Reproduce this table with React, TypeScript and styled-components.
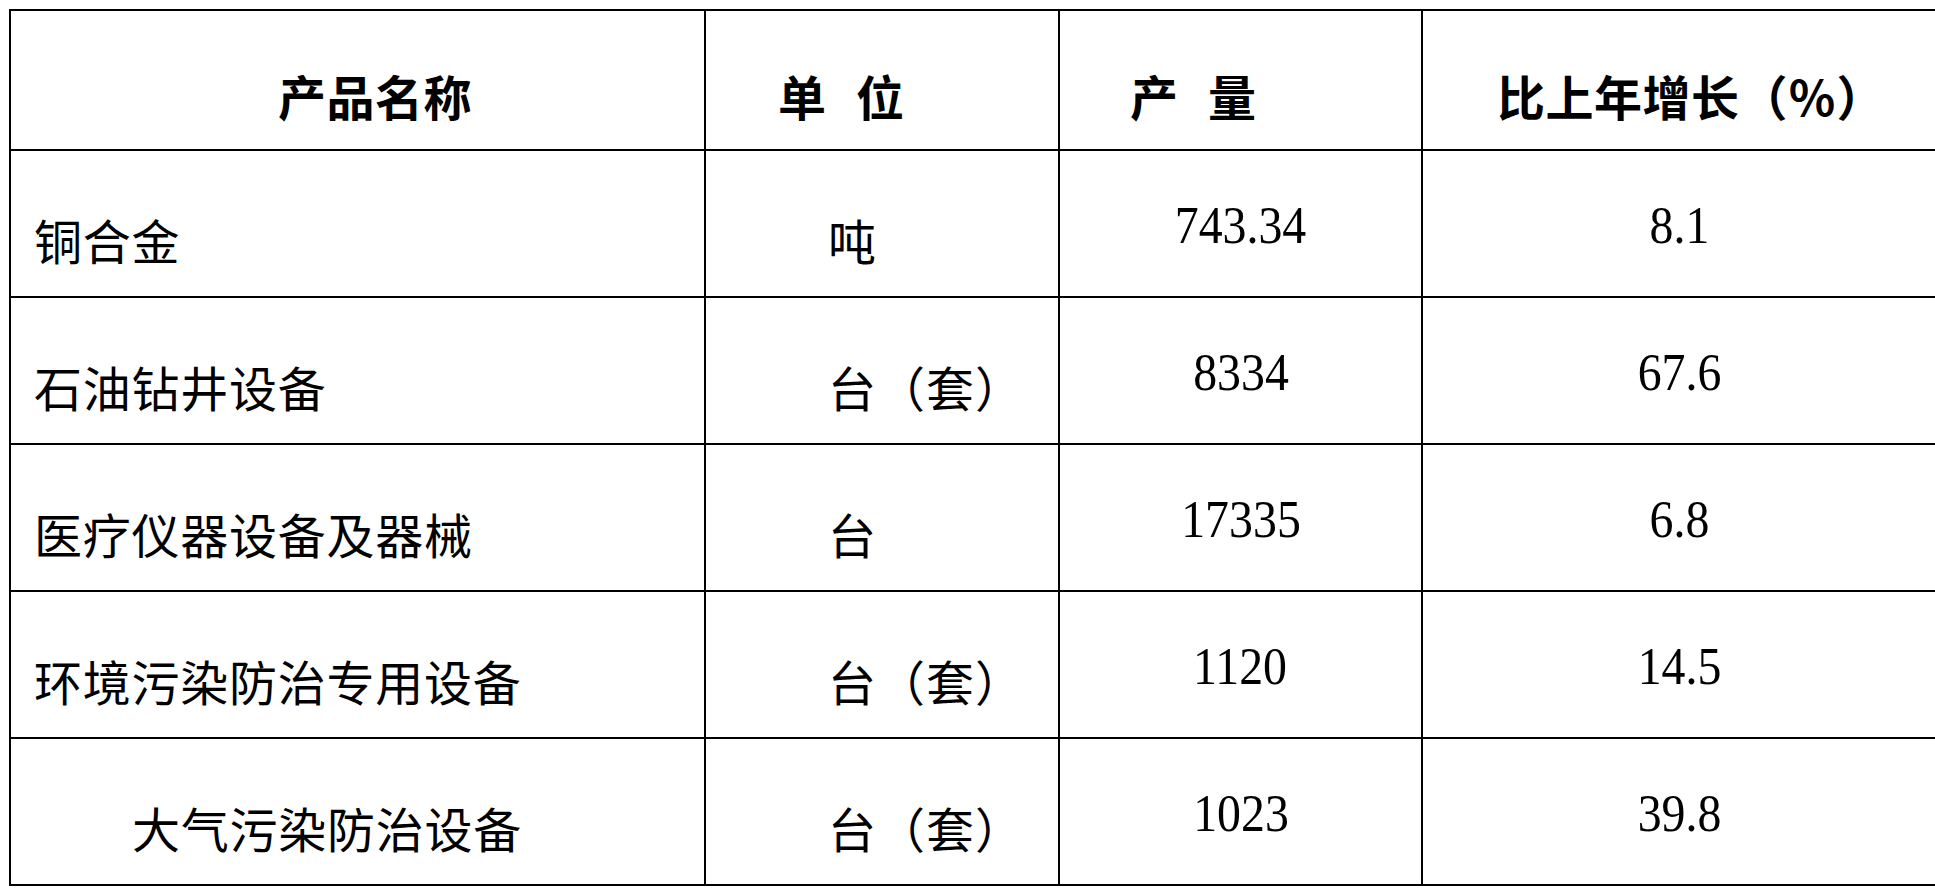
import React from "react";
import styled, { createGlobalStyle } from "styled-components";

const GlobalStyle = createGlobalStyle`
  html, body {
    margin: 0;
    padding: 0;
    background: #fff;
    overflow: hidden;
  }

  body {
    padding: 9px 0 0 9px;
    color: #000;
    font-family: "Noto Sans CJK SC", "Liberation Serif", serif;
  }
`;

const Sheet = styled.div`
  display: grid;
  grid-template-columns: 695px 354px 363px 1fr;
  grid-auto-rows: 147px;
  grid-template-rows: 140px;
  border-top: 2px solid #000;
  border-left: 2px solid #000;
`;

const Cell = styled.div<{ $last?: boolean }>`
  box-sizing: border-box;
  display: flex;
  align-items: flex-start;
  border-bottom: 2px solid #000;
  border-right: ${(p) => (p.$last ? "none" : "2px solid #000")};
  white-space: nowrap;
`;

const HeadCell = styled(Cell)<{ $pad: number }>`
  padding: 60px 0 0 ${(p) => p.$pad}px;
  font-family: "Noto Sans CJK SC", sans-serif;
  font-size: 48px;
  font-weight: 700;
  line-height: 48px;
  letter-spacing: 0.5px;
  word-spacing: 18px;
`;

const NameCell = styled(Cell)<{ $indent?: boolean }>`
  padding: 64px 0 0 ${(p) => (p.$indent ? 121 : 23)}px;
  font-family: "Noto Sans CJK SC", sans-serif;
  font-size: 48px;
  line-height: 48px;
  letter-spacing: 0.75px;
`;

const UnitCell = styled(Cell)`
  padding: 64px 0 0 122px;
  font-family: "Noto Sans CJK SC", sans-serif;
  font-size: 48px;
  line-height: 48px;
  letter-spacing: 1px;
`;

const NumCell = styled(Cell)`
  justify-content: center;
  padding-top: 49px;
  font-family: "Liberation Serif", "Times New Roman", serif;
  font-size: 52px;
  line-height: 52px;
`;

const Num = styled.span`
  display: inline-block;
  transform: scaleX(0.92);
`;

const headers = [
  { label: "产品名称", pad: 267 },
  { label: "单 位", pad: 72 },
  { label: "产 量", pad: 70 },
  { label: "比上年增长（％）", pad: 74 },
];

const rows = [
  { name: "铜合金", unit: "吨", output: "743.34", growth: "8.1" },
  { name: "石油钻井设备", unit: "台（套）", output: "8334", growth: "67.6" },
  { name: "医疗仪器设备及器械", unit: "台", output: "17335", growth: "6.8" },
  { name: "环境污染防治专用设备", unit: "台（套）", output: "1120", growth: "14.5" },
  { name: "大气污染防治设备", unit: "台（套）", output: "1023", growth: "39.8", sub: true },
];

export default function App() {
  return (
    <>
      <GlobalStyle />
      <Sheet>
        {headers.map((h, i) => (
          <HeadCell key={h.label} $pad={h.pad} $last={i === headers.length - 1}>
            {h.label}
          </HeadCell>
        ))}
        {rows.map((r) => (
          <React.Fragment key={r.name}>
            <NameCell $indent={r.sub}>{r.name}</NameCell>
            <UnitCell>{r.unit}</UnitCell>
            <NumCell>
              <Num>{r.output}</Num>
            </NumCell>
            <NumCell $last>
              <Num>{r.growth}</Num>
            </NumCell>
          </React.Fragment>
        ))}
      </Sheet>
    </>
  );
}
